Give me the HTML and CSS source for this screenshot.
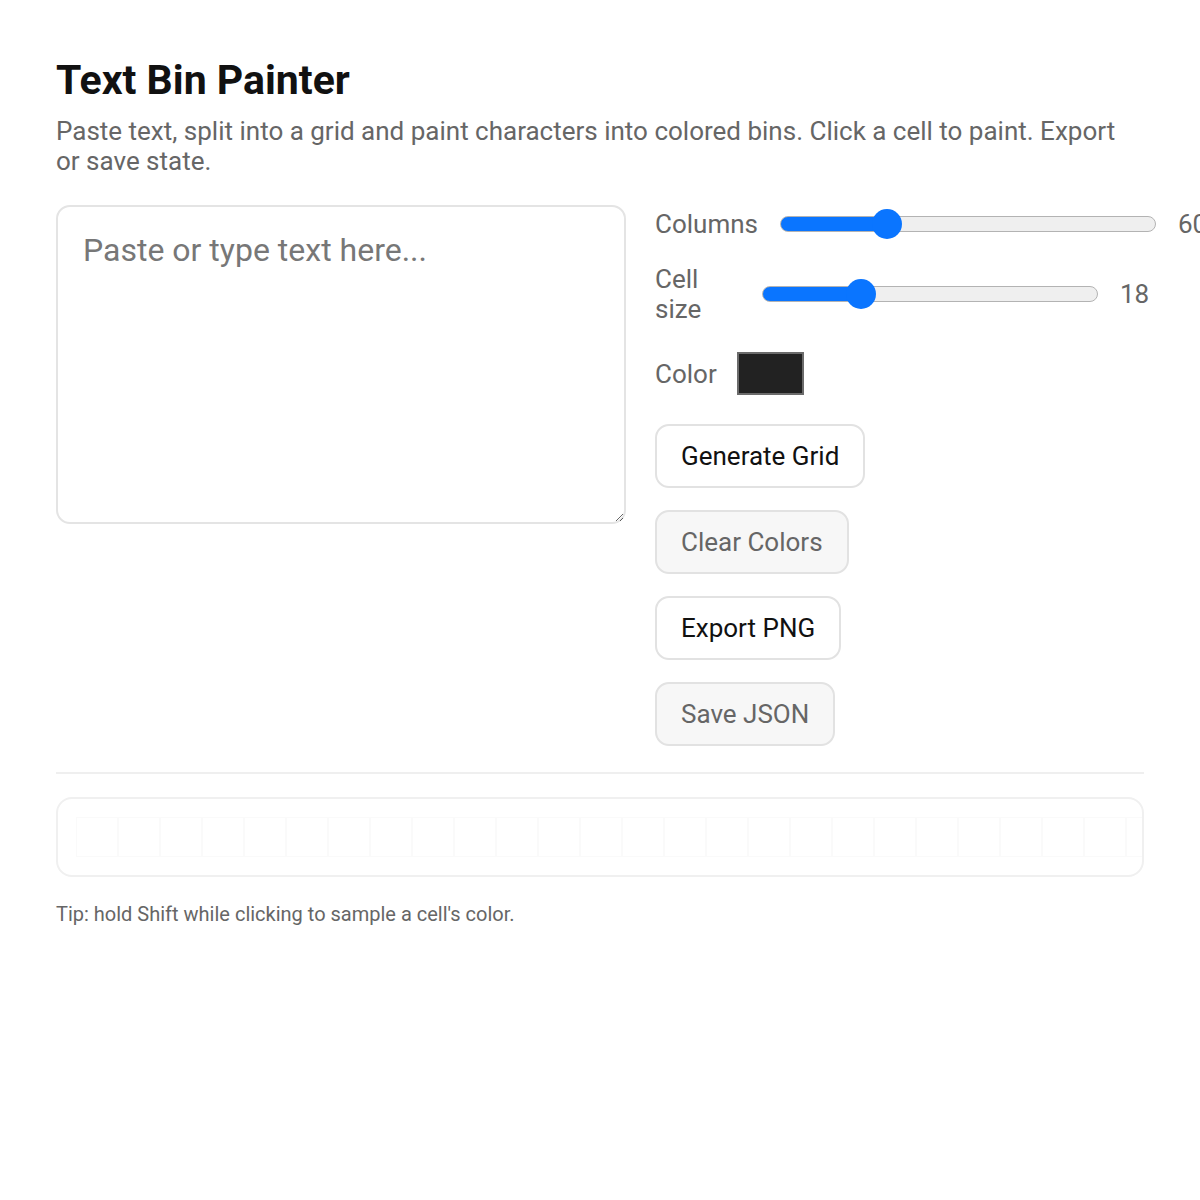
FILE: index.html
```html
<!DOCTYPE html>
<html lang="en">
<head>
<meta charset="utf-8">
<title>Text Bin Painter</title>
<link rel="stylesheet" href="styles.css">
</head>
<body>
<main class="app">
  <h1 class="title">Text Bin Painter</h1>
  <p class="lead">Paste text, split into a grid and paint characters into colored bins. Click a cell to paint. Export or save state.</p>
  <section class="workspace">
    <textarea class="source" placeholder="Paste or type text here..."></textarea>
    <div class="controls">
      <div class="row row-cols">
        <label class="lbl">Columns</label>
        <input class="slider slider-cols" type="range" min="10" max="200" value="60" style="--p: 25.7%">
        <span class="val">60</span>
      </div>
      <div class="row row-size">
        <label class="lbl lbl-size">Cell size</label>
        <input class="slider slider-size" type="range" min="6" max="50" value="18" style="--p: 26.5%">
        <span class="val">18</span>
      </div>
      <div class="row row-color">
        <label class="lbl">Color</label>
        <span class="swatch"></span>
      </div>
      <button class="btn">Generate Grid</button>
      <button class="btn btn-muted">Clear Colors</button>
      <button class="btn">Export PNG</button>
      <button class="btn btn-muted">Save JSON</button>
    </div>
  </section>
  <hr class="divider">
  <div class="grid-box">
    <div class="cells">
      <span></span><span></span><span></span><span></span><span></span><span></span><span></span><span></span><span></span><span></span>
      <span></span><span></span><span></span><span></span><span></span><span></span><span></span><span></span><span></span><span></span>
      <span></span><span></span><span></span><span></span><span></span><span></span><span></span><span></span><span></span><span></span>
    </div>
  </div>
  <p class="tip">Tip: hold Shift while clicking to sample a cell's color.</p>
</main>
</body>
</html>
```
FILE: styles.css
```css
* { box-sizing: border-box; }
html, body { margin: 0; background: #fff; }
body {
  font-family: Roboto, "Liberation Sans", Arial, sans-serif;
  color: #111;
  overflow: hidden;
}
.app {
  padding: 56px 56px 40px;
  width: 1200px;
}
.title {
  margin: 0;
  font-size: 41px;
  line-height: 48px;
  font-weight: 700;
  color: #111;
}
.lead {
  margin: 12px 0 0;
  font-size: 26px;
  line-height: 30px;
  color: #666;
}
.workspace {
  display: grid;
  grid-template-columns: 570px 1fr;
  column-gap: 29px;
  margin-top: 29px;
}
.source {
  width: 570px;
  height: 319px;
  border: 2px solid #e4e4e4;
  border-radius: 14px;
  padding: 24px 25px;
  font-family: Roboto, "Liberation Sans", Arial, sans-serif;
  font-size: 32px;
  line-height: 38px;
  color: #222;
  resize: both;
  outline: none;
}
.source::placeholder { color: #777; }
.controls {
  display: flex;
  flex-direction: column;
  align-items: flex-start;
  gap: 22px;
  padding-top: 4px;
}
.row {
  display: flex;
  align-items: center;
  gap: 22px;
  white-space: nowrap;
}
.row-size { margin-top: 3px; }
.row-color { gap: 20px; margin-top: 6px; margin-bottom: 7px; }
.lbl {
  font-size: 26px;
  line-height: 30px;
  color: #666;
}
.lbl-size { width: 85px; white-space: normal; }
.val {
  font-size: 26px;
  line-height: 30px;
  color: #666;
}
.slider {
  -webkit-appearance: none;
  appearance: none;
  margin: 0;
  height: 30px;
  background: transparent;
}
.slider-cols { width: 376px; }
.slider-size { width: 336px; }
.slider::-webkit-slider-runnable-track {
  height: 16px;
  border-radius: 8px;
  border: 1.5px solid #b3b3b3;
  background: linear-gradient(to right, #0a75ff 0, #0a75ff var(--p), #efefef var(--p), #efefef 100%);
}
.slider::-webkit-slider-thumb {
  -webkit-appearance: none;
  width: 30px;
  height: 30px;
  border-radius: 50%;
  background: #0a75ff;
  border: none;
  margin-top: -8.5px;
}
.swatch {
  display: block;
  width: 67px;
  height: 43px;
  background: #222;
  border: 2px solid #6b6b6b;
}
.btn {
  font-family: Roboto, "Liberation Sans", Arial, sans-serif;
  font-size: 26px;
  line-height: 30px;
  height: 64px;
  padding: 0 24px;
  border: 2px solid #e2e2e2;
  border-radius: 14px;
  background: #fff;
  color: #111;
}
.btn-muted {
  background: #f7f7f7;
  color: #666;
}
.divider {
  border: none;
  border-top: 2px solid #efefef;
  margin: 26px 0 0;
}
.grid-box {
  margin-top: 23px;
  height: 80px;
  border: 2px solid #f0f0f0;
  border-radius: 16px;
  overflow: hidden;
  padding: 18px 18px;
}
.cells {
  display: flex;
}
.cells span {
  flex: 0 0 42px;
  height: 40px;
  border: 1px solid #fafafa;
}
.tip {
  margin: 24px 0 0;
  font-size: 20px;
  line-height: 26px;
  color: #666;
}
```
